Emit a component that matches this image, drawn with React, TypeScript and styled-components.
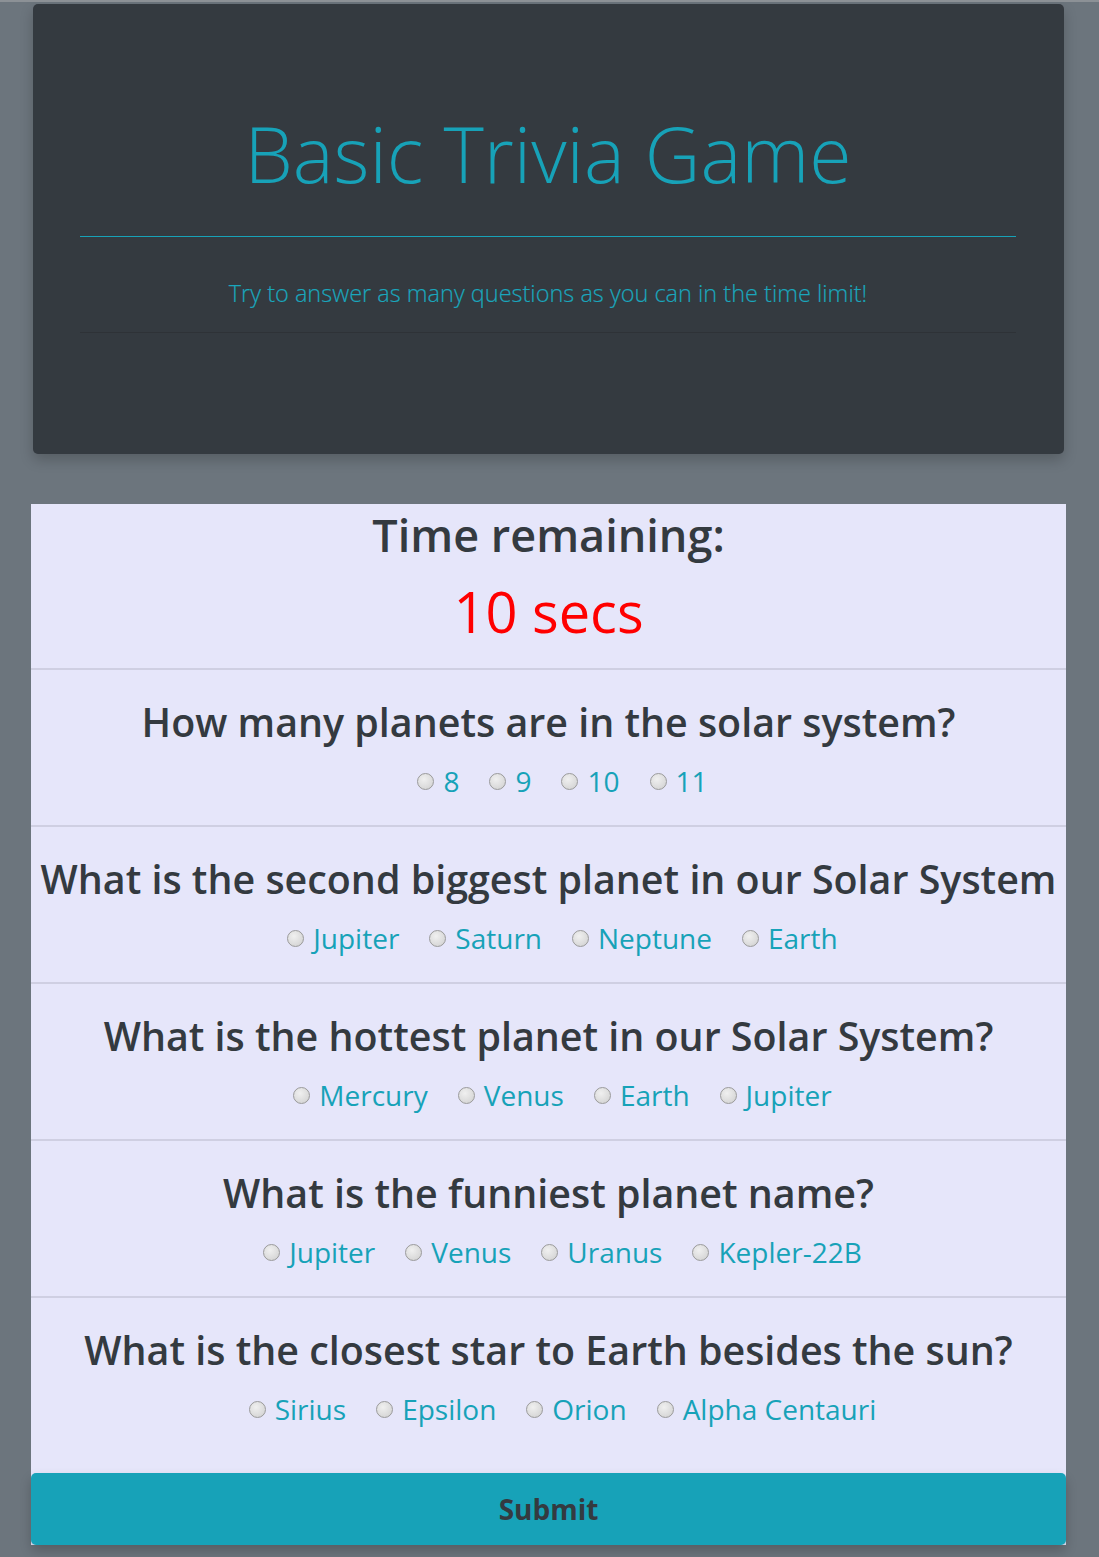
import React from "react";
import styled, { createGlobalStyle } from "styled-components";

const GlobalStyle = createGlobalStyle`
  html, body {
    margin: 0;
    padding: 0;
    background: #6c757d;
  }
  body {
    border-top: 2px solid #8c9196;
    font-family: "Open Sans", "Noto Sans", sans-serif;
  }
`;

const Page = styled.div`
  width: 1099px;
  min-height: 1555px;
  padding-top: 2px;
  box-sizing: border-box;
  background: #6c757d;
`;

const Jumbotron = styled.header`
  margin: 0 35px 0 33px;
  padding: 100px 48px 121px 47px;
  background: #343a40;
  border-radius: 5px;
  box-shadow: 0 6px 14px rgba(0, 0, 0, 0.2);
  display: flex;
  flex-direction: column;
  align-items: stretch;
`;

const Title = styled.h1`
  margin: 0;
  font-weight: 300;
  font-size: 77px;
  line-height: 100px;
  color: #17a2b8;
  text-align: center;
`;

const Rule = styled.hr<{ $tone: "info" | "dark" }>`
  margin: ${(p) => (p.$tone === "info" ? "32px 0 0" : "24px 0 0")};
  border: 0;
  height: 1px;
  background: ${(p) => (p.$tone === "info" ? "#17a2b8" : "#2e3237")};
`;

const Lead = styled.p`
  margin: 41px 0 0;
  font-weight: 300;
  font-size: 23.5px;
  line-height: 30px;
  color: #1aa6bc;
  text-align: center;
  -webkit-text-stroke: 0.2px #1aa6bc;
`;

const Card = styled.main`
  margin: 50px 33px 0 31px;
  background: #e6e6fa;
  display: flex;
  flex-direction: column;
`;

const TimerBlock = styled.section`
  padding: 1px 0 22px;
  border-bottom: 2px solid #cfcfe2;
  display: flex;
  flex-direction: column;
  align-items: center;
`;

const TimerLabel = styled.h2`
  margin: 0;
  font-weight: 600;
  font-size: 45px;
  line-height: 60px;
  color: #343a40;
`;

const TimerValue = styled.div`
  margin-top: 11px;
  font-weight: 400;
  font-size: 56px;
  line-height: 70px;
  color: #ff0000;
`;

const QuestionBlock = styled.section<{ $last?: boolean }>`
  padding: 24px 0 ${(p) => (p.$last ? "44px" : "24px")};
  border-bottom: ${(p) => (p.$last ? "none" : "2px solid #cfcfe2")};
  display: flex;
  flex-direction: column;
  align-items: center;
`;

const QuestionText = styled.h3`
  margin: 0;
  font-weight: 600;
  font-size: 39.4px;
  line-height: 56px;
  color: #343a40;
  white-space: nowrap;
`;

const Options = styled.div`
  margin-top: 11px;
  padding-left: 28px;
  display: flex;
  justify-content: center;
  gap: 30px;
  height: 40px;
  align-items: center;
`;

const Option = styled.label`
  display: inline-flex;
  align-items: center;
  gap: 9px;
  font-size: 28px;
  line-height: 40px;
  color: #17a2b8;
  cursor: pointer;
`;

const Radio = styled.input`
  appearance: none;
  margin: 0;
  width: 17px;
  height: 17px;
  border-radius: 50%;
  border: 1px solid #9a9a9a;
  background: radial-gradient(circle at 40% 35%, #f0f0f0 0%, #dcdcdc 60%, #cdcdcd 100%);
  box-sizing: border-box;
  flex: none;
  &:checked {
    background: radial-gradient(circle, #333 0 3px, #e6e6e6 4px);
  }
`;

const SubmitButton = styled.button`
  height: 72px;
  border: 0;
  border-radius: 5px;
  background: #17a2b8;
  color: #343a40;
  font-family: "Open Sans", sans-serif;
  font-weight: 700;
  font-size: 28px;
  box-shadow: 0 6px 12px rgba(0, 0, 0, 0.2);
  cursor: pointer;
`;

const questions = [
  { q: "How many planets are in the solar system?", a: ["8", "9", "10", "11"] },
  { q: "What is the second biggest planet in our Solar System", a: ["Jupiter", "Saturn", "Neptune", "Earth"] },
  { q: "What is the hottest planet in our Solar System?", a: ["Mercury", "Venus", "Earth", "Jupiter"] },
  { q: "What is the funniest planet name?", a: ["Jupiter", "Venus", "Uranus", "Kepler-22B"] },
  { q: "What is the closest star to Earth besides the sun?", a: ["Sirius", "Epsilon", "Orion", "Alpha Centauri"] },
];

export default function App() {
  return (
    <Page>
      <GlobalStyle />
      <Jumbotron>
        <Title>Basic Trivia Game</Title>
        <Rule $tone="info" />
        <Lead>Try to answer as many questions as you can in the time limit!</Lead>
        <Rule $tone="dark" />
      </Jumbotron>
      <Card>
        <TimerBlock>
          <TimerLabel>Time remaining:</TimerLabel>
          <TimerValue>10 secs</TimerValue>
        </TimerBlock>
        {questions.map((item, i) => (
          <QuestionBlock key={i} $last={i === questions.length - 1}>
            <QuestionText>{item.q}</QuestionText>
            <Options>
              {item.a.map((ans) => (
                <Option key={ans}>
                  <Radio type="radio" name={`q${i}`} value={ans} />
                  {ans}
                </Option>
              ))}
            </Options>
          </QuestionBlock>
        ))}
        <SubmitButton type="button">Submit</SubmitButton>
      </Card>
    </Page>
  );
}
